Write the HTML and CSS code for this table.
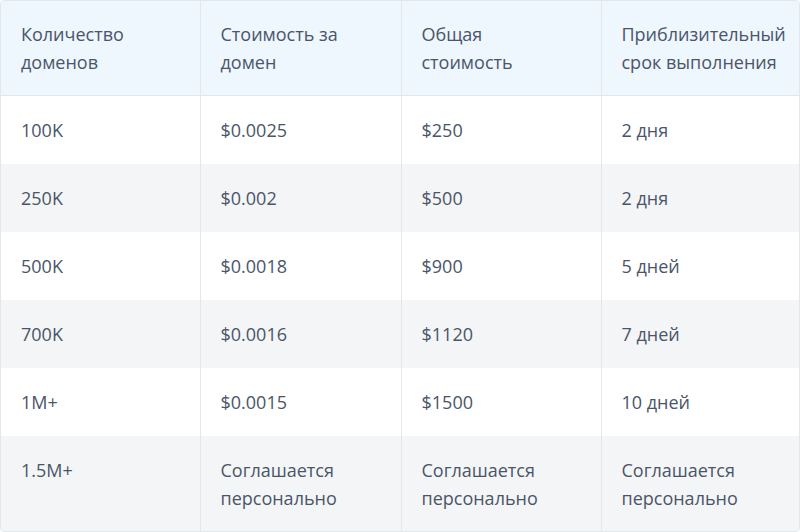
FILE: index.html
```html
<!DOCTYPE html>
<html lang="ru">
<head>
<meta charset="utf-8">
<link rel="stylesheet" href="styles.css">
</head>
<body>
<div class="wrap">
<table class="price">
<colgroup><col class="c1"><col class="c2"><col class="c3"><col class="c4"></colgroup>
<thead>
<tr><th>Количество доменов</th><th>Стоимость за домен</th><th class="narrow">Общая стоимость</th><th>Приблизительный срок выполнения</th></tr>
</thead>
<tbody>
<tr><td>100K</td><td>$0.0025</td><td>$250</td><td>2 дня</td></tr>
<tr class="alt"><td>250K</td><td>$0.002</td><td>$500</td><td>2 дня</td></tr>
<tr><td>500K</td><td>$0.0018</td><td>$900</td><td>5 дней</td></tr>
<tr class="alt"><td>700K</td><td>$0.0016</td><td>$1120</td><td>7 дней</td></tr>
<tr><td>1M+</td><td>$0.0015</td><td>$1500</td><td>10 дней</td></tr>
<tr class="alt last"><td>1.5M+</td><td>Соглашается персонально</td><td>Соглашается персонально</td><td>Соглашается персонально</td></tr>
</tbody>
</table>
</div>
</body>
</html>
```
FILE: styles.css
```css
html, body { margin: 0; padding: 0; background: #fff; }
.wrap {
  width: 800px;
  height: 532px;
  box-sizing: border-box;
  border: 1px solid #e3e6ea;
  border-radius: 4px;
  overflow: hidden;
}
.price {
  width: 100%;
  border-collapse: collapse;
  table-layout: fixed;
  font-family: "Open Sans", "Noto Sans", sans-serif;
  font-size: 18px;
  line-height: 28px;
  color: #4a5568;
}
.c1 { width: 199px; }
.c2 { width: 201px; }
.c3 { width: 200px; }
.c4 { width: 198px; }
.price th, .price td {
  text-align: left;
  font-weight: 400;
  vertical-align: top;
  padding: 20px 10px 20px 20px;
  border-left: 1px solid #e3e6ea;
}
.price th.narrow { padding-right: 30px; }
.price th:first-child, .price td:first-child { border-left: none; }
.price thead tr { background: #eef6fe; }
.price th { border-bottom: 1px solid #e3e6ea; padding-top: 19px; padding-bottom: 19px; }
.price tr.alt { background: #f4f5f7; }
.price tr.last td { padding-bottom: 19px; }
```
